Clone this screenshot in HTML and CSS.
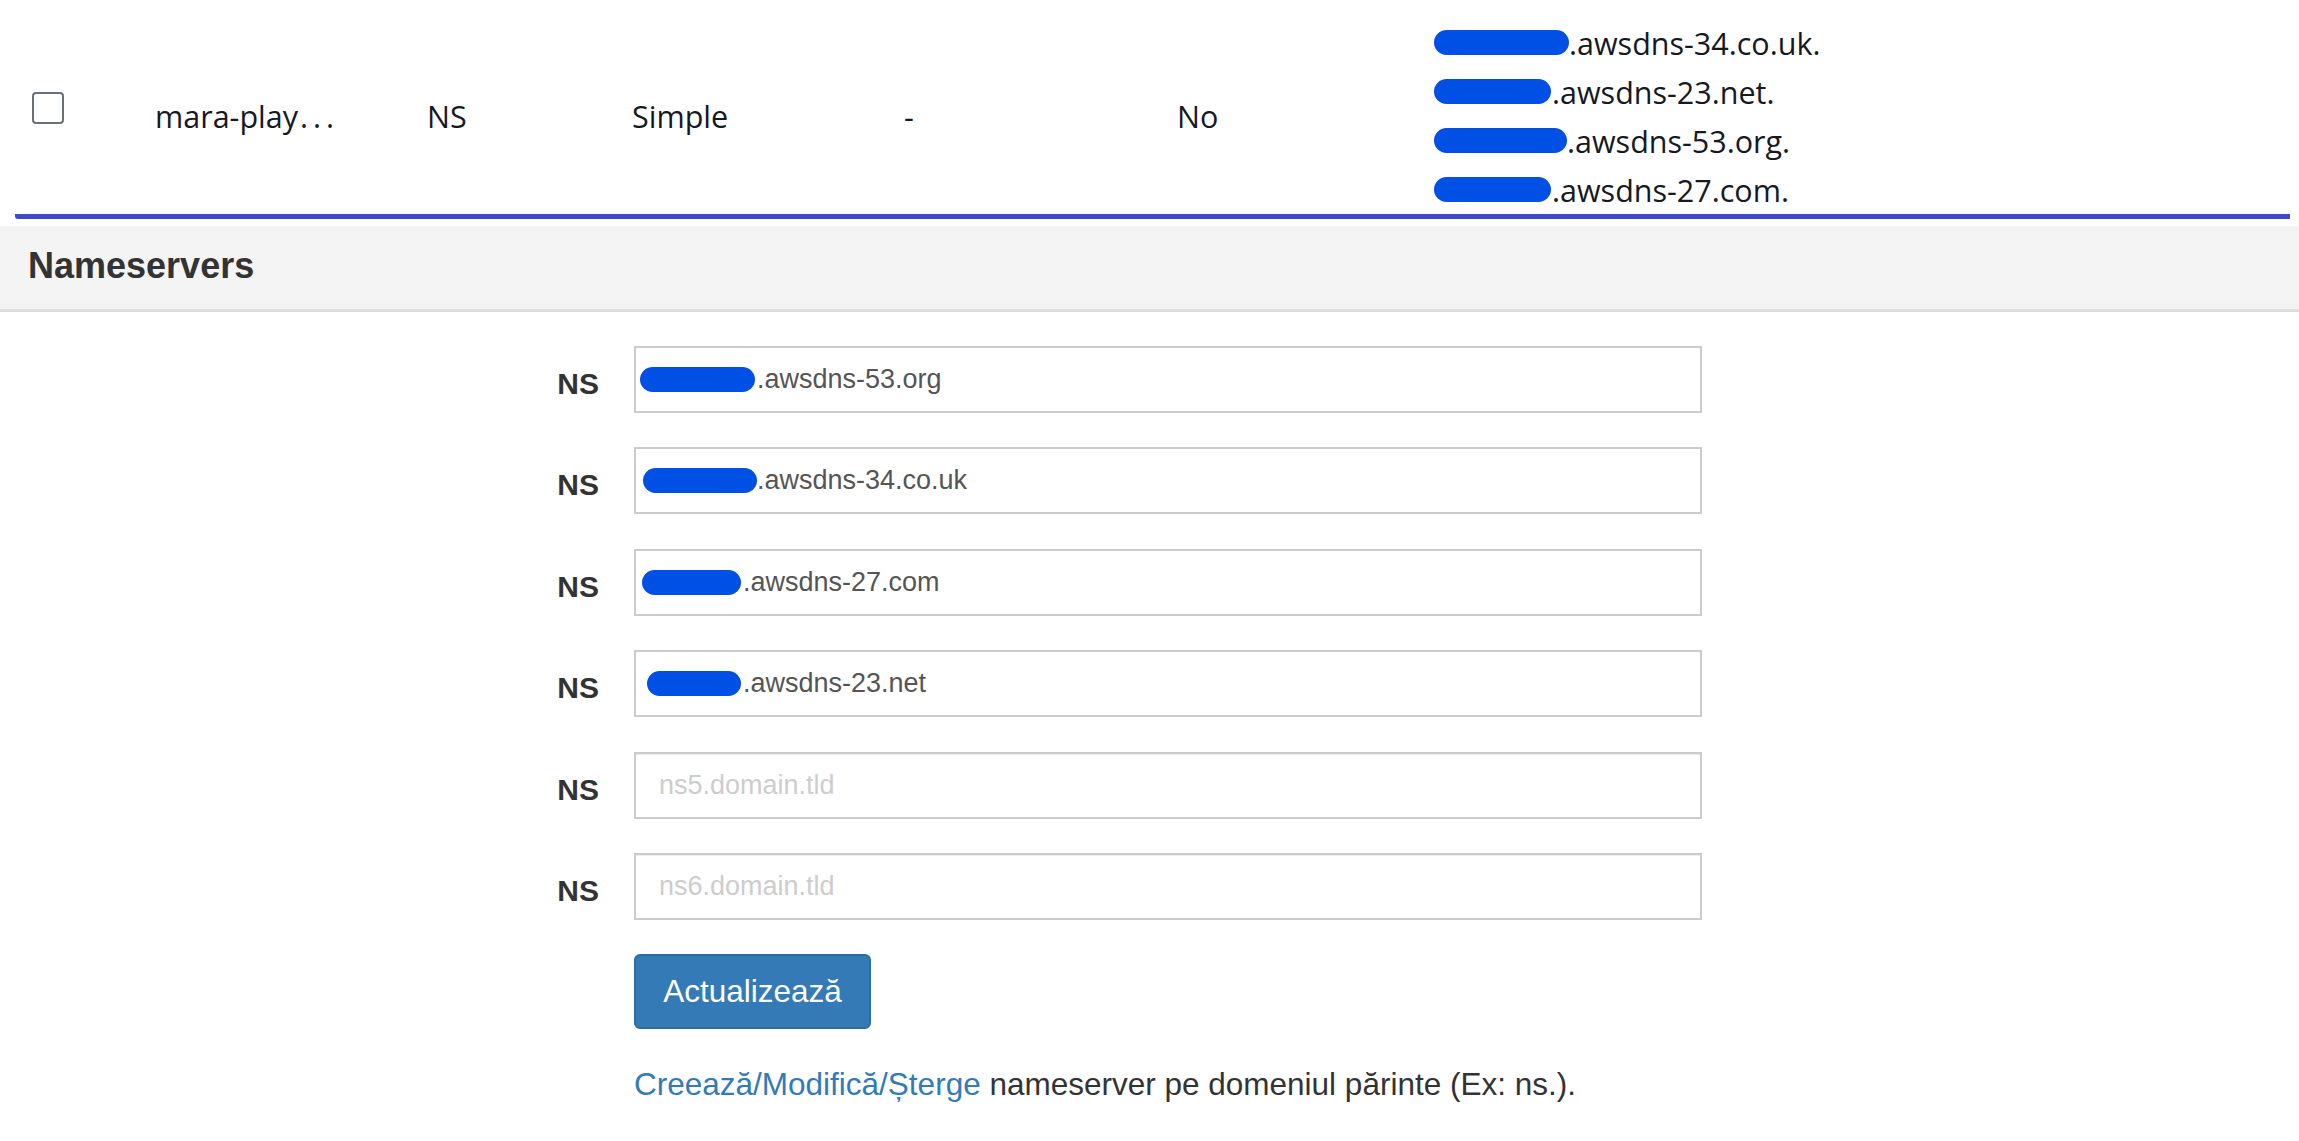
FILE: index.html
```html
<!DOCTYPE html>
<html lang="ro">
<head>
<meta charset="utf-8">
<title>Nameservers</title>
<link rel="stylesheet" href="styles.css">
</head>
<body>
<div class="record-row">
  <div class="cell cell-check"><span class="checkbox"></span></div>
  <div class="cell">mara-play<span class="ellipsis">...</span></div>
  <div class="cell">NS</div>
  <div class="cell">Simple</div>
  <div class="cell">-</div>
  <div class="cell">No</div>
  <div class="cell cell-values">
    <div class="value-line"><span class="redact r-135"></span><span>.awsdns-34.co.uk.</span></div>
    <div class="value-line"><span class="redact r-116"></span><span>.awsdns-23.net.</span></div>
    <div class="value-line"><span class="redact r-133"></span><span>.awsdns-53.org.</span></div>
    <div class="value-line"><span class="redact r-116"></span><span>.awsdns-27.com.</span></div>
  </div>
</div>

<div class="panel-heading">Nameservers</div>

<form class="ns-form">
  <label class="ns-label">NS</label>
  <div class="field"><span class="redact in-blob b1"></span><span>.awsdns-53.org</span></div>

  <label class="ns-label">NS</label>
  <div class="field"><span class="redact in-blob b2"></span><span>.awsdns-34.co.uk</span></div>

  <label class="ns-label">NS</label>
  <div class="field"><span class="redact in-blob b3"></span><span>.awsdns-27.com</span></div>

  <label class="ns-label">NS</label>
  <div class="field"><span class="redact in-blob b4"></span><span>.awsdns-23.net</span></div>

  <label class="ns-label">NS</label>
  <input class="field field-input" type="text" placeholder="ns5.domain.tld">

  <label class="ns-label">NS</label>
  <input class="field field-input" type="text" placeholder="ns6.domain.tld">

  <div class="actions"><button type="button" class="btn-primary">Actualizează</button></div>

  <p class="note"><a href="#" class="link">Creează/Modifică/Șterge</a> nameserver pe domeniul părinte (Ex: ns.).</p>
</form>
</body>
</html>
```

FILE: styles.css
```css
* { box-sizing: border-box; }

body {
  margin: 0;
  background: #ffffff;
  font-family: "Liberation Sans", Arial, sans-serif;
  color: #333333;
}

/* top table row */
.record-row {
  margin: 0 9px 0 15px;
  padding-top: 18px;
  display: grid;
  grid-template-columns: 140px 272px 205px 272px 273px 257px 1fr;
  align-items: center;
  border-bottom: 5px solid #4049c9;
  border-bottom-left-radius: 3px;
  font-family: "Open Sans", "Noto Sans", sans-serif;
  font-size: 30.5px;
  color: #16191f;
}

.cell { white-space: nowrap; }

.ellipsis {
  margin-left: 2px;
  letter-spacing: 5px;
}

.cell-check {
  padding-left: 17px;
  padding-bottom: 17px;
  display: flex;
  align-items: center;
}

.checkbox {
  display: block;
  width: 32px;
  height: 32px;
  border: 2px solid #687078;
  border-radius: 4px;
  background: #ffffff;
}

.cell-values {
  display: flex;
  flex-direction: column;
}

.value-line {
  display: flex;
  align-items: center;
  height: 49px;
}

.redact {
  display: inline-block;
  height: 25px;
  border-radius: 13px;
  background: #0050e6;
  flex: none;
}

.r-135 { width: 135px; }
.r-133 { width: 133px; }
.r-116 { width: 117px; margin-right: 1px; }

/* panel heading */
.panel-heading {
  margin-top: 7px;
  height: 86px;
  padding: 0 0 3px 28px;
  display: flex;
  align-items: center;
  background: #f4f4f4;
  border-bottom: 3px solid #dddddd;
  font-weight: bold;
  font-size: 36px;
  color: #333333;
}

/* form */
.ns-form {
  margin: 34px 0 0 0;
  display: grid;
  grid-template-columns: 600px 1068px;
  column-gap: 34px;
  row-gap: 34.4px;
}

.ns-label {
  grid-column: 1;
  align-self: start;
  text-align: right;
  padding-top: 21px;
  padding-right: 1px;
  font-weight: bold;
  font-size: 30px;
  line-height: 34px;
  color: #333333;
}

.field {
  grid-column: 2;
  height: 67px;
  border: 2px solid #cccccc;
  background: #ffffff;
  display: flex;
  align-items: center;
  padding: 0 0 0 4px;
  font-family: "Liberation Sans", Arial, sans-serif;
  font-size: 27px;
  color: #555555;
  border-radius: 0;
}

.field-input {
  padding-left: 23px;
  width: 100%;
  outline: none;
  box-shadow: inset 0 1px 1px rgba(0,0,0,0.075);
}

.field-input::placeholder { color: #cdcdcd; }

.in-blob { width: 115px; }
.b1 { margin-left: 0; margin-right: 2px; }
.b2 { margin-left: 3px; width: 114px; }
.b3 { margin-left: 2px; width: 99px; margin-right: 2px; }
.b4 { margin-left: 7px; width: 94px; margin-right: 2px; }

.actions { grid-column: 2; }

.btn-primary {
  width: 237px;
  height: 75px;
  background: #337ab7;
  border: 2px solid #2e6da4;
  border-radius: 6px;
  color: #ffffff;
  font-family: "Liberation Sans", Arial, sans-serif;
  font-size: 31.5px;
  padding: 0;
}

.note {
  grid-column: 2;
  margin: 2px 0 0 0;
  font-size: 31.5px;
  line-height: 1.2;
  color: #333333;
  white-space: nowrap;
}

.link {
  color: #337ab7;
  text-decoration: none;
}
```
